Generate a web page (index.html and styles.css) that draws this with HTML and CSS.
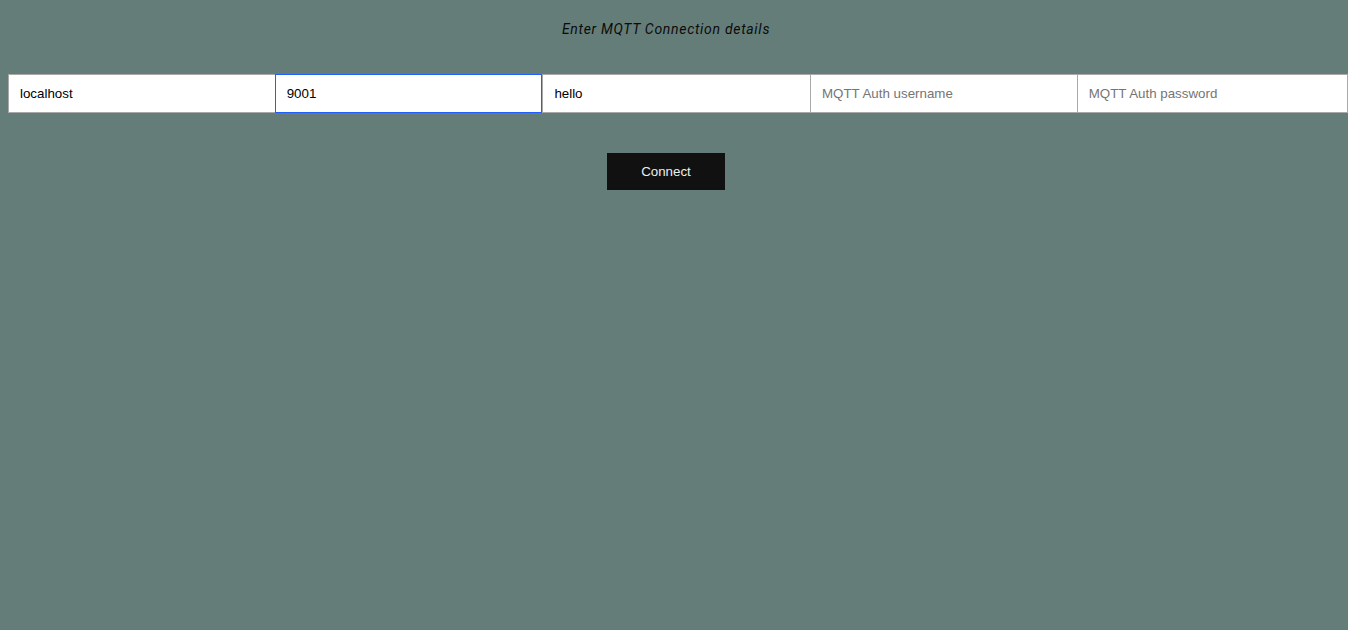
FILE: index.html
```html
<!DOCTYPE html>
<html>
<head>
<meta charset="utf-8">
<link rel="stylesheet" href="styles.css">
</head>
<body>
<div class="center">
  <p class="title">Enter MQTT Connection details</p>
</div>
<div class="fields">
  <input class="field" type="text" value="localhost">
  <input class="field focused" type="text" value="9001">
  <input class="field" type="text" value="hello">
  <input class="field" type="text" placeholder="MQTT Auth username">
  <input class="field last" type="password" placeholder="MQTT Auth password">
</div>
<div class="center actions">
  <button class="connect" type="button">Connect</button>
</div>
</body>
</html>
```
FILE: styles.css
```css
html, body {
  background: #657d78;
}
body {
  margin: 8px 0 8px 8px;
  font-family: "Liberation Sans", Arial, sans-serif;
}
.center {
  width: 1316px;
  text-align: center;
}
.title {
  margin: 13px 0 0;
  font-family: Roboto, sans-serif;
  font-style: italic;
  font-size: 14px;
  letter-spacing: 0.7px;
  line-height: 16px;
  color: #0b0b0b;
}
.fields {
  display: flex;
  margin-top: 37px;
}
.field {
  box-sizing: border-box;
  flex: 267 1 0;
  height: 39px;
  margin: 0;
  padding: 0 11px;
  border: 1px solid #a9a9a9;
  border-right: none;
  background: #fff;
  font-family: "Liberation Sans", Arial, sans-serif;
  font-size: 13.33px;
  color: #000;
  outline: none;
  min-width: 0;
  width: 0;
}
.field:nth-child(3) {
  flex-grow: 268;
}
.field::placeholder {
  color: #757575;
}
.field.focused {
  border: 1px solid #1f5fff;
}
.field.last {
  flex-grow: 271;
  border-right: 1px solid #a9a9a9;
}
.actions {
  margin-top: 40px;
}
.connect {
  width: 118px;
  height: 37px;
  border: none;
  background: #111;
  color: #eee;
  font-family: "Liberation Sans", Arial, sans-serif;
  font-size: 13.33px;
  padding: 0;
  cursor: pointer;
}
```
